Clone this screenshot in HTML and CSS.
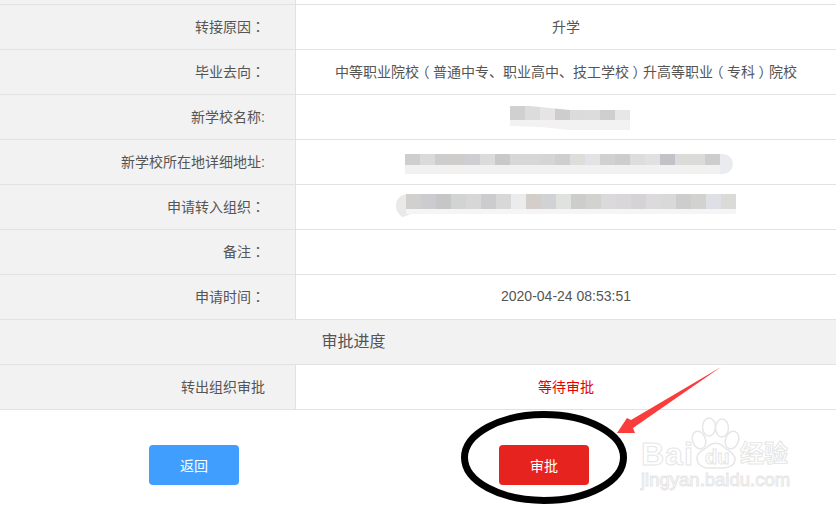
FILE: index.html
```html
<!DOCTYPE html>
<html lang="en">
<head>
  <meta charset="UTF-8" />
  <title>转接审批</title>
  <link rel="stylesheet" href="styles.css">
</head>
<body>
  <div class="page">
    <div class="rows">
      <div class="row row-stub"><div class="label"></div><div class="value"></div></div>
      <div class="row"><div class="label"><span>转接原因<span class="tc">：</span></span></div><div class="value">升学</div></div>
      <div class="row"><div class="label"><span>毕业去向<span class="tc">：</span></span></div><div class="value"><span>中等职业院校<span class="paren">（</span>普通中专、职业高中、技工学校<span class="paren">）</span>升高等职业<span class="paren">（</span>专科<span class="paren">）</span>院校</span></div></div>
      <div class="row"><div class="label">新学校名称:</div><div class="value">
        <svg class="blur blur-name" width="120" height="24" viewBox="0 0 120 24">
          <g>
            <rect x="0" width="15" height="14" fill="#d0d0d0"/><rect x="15" width="15" height="14" fill="#dcdcdc"/><rect x="30" width="15" height="14" fill="#e6e4e5"/><rect x="45" width="15" height="14" fill="#cdcdcd"/><rect x="60" width="15" height="14" fill="#dbdbdb"/><rect x="75" width="15" height="14" fill="#dcdcda"/><rect x="90" width="15" height="14" fill="#cfcfcf"/><rect x="105" width="15" height="14" fill="#e6e7e9"/>
            <rect x="0" y="14" width="120" height="10" fill="#f2f2f2"/>
          </g>
          <polygon points="20,0 120,0 120,4 60,4" fill="#fff"/>
          <polygon points="0,20 30,21 60,24 0,24" fill="#fff"/>
        </svg>
      </div></div>
      <div class="row"><div class="label">新学校所在地详细地址:</div><div class="value">
        <svg class="blur blur-addr" width="328" height="20" viewBox="0 0 328 20">
          <path d="M315 0h3a10 10 0 0 1 0 20h-3z" fill="#eaebee"/>
          <rect x="0" width="15" height="11" fill="#cecece"/><rect x="15" width="15" height="11" fill="#d9dbda"/><rect x="30" width="30" height="11" fill="#cecdcc"/><rect x="60" width="15" height="11" fill="#cfcfd3"/><rect x="75" width="15" height="11" fill="#dbdbdb"/><rect x="90" width="15" height="11" fill="#c7cac9"/><rect x="105" width="30" height="11" fill="#d7d7d7"/><rect x="135" width="15" height="11" fill="#d6d5d4"/><rect x="150" width="15" height="11" fill="#d0cfd0"/><rect x="165" width="15" height="11" fill="#dfddda"/><rect x="180" width="15" height="11" fill="#e2e3e5"/><rect x="195" width="15" height="11" fill="#d1d1d2"/><rect x="210" width="15" height="11" fill="#cdcdcb"/><rect x="225" width="15" height="11" fill="#dddddd"/><rect x="240" width="15" height="11" fill="#e1e1e1"/><rect x="255" width="15" height="11" fill="#c2c3c8"/><rect x="270" width="30" height="11" fill="#dbdbd9"/><rect x="300" width="15" height="11" fill="#cdcdcd"/>
          <rect x="0" y="11" width="315" height="9" fill="#f1f1f1"/>
        </svg>
      </div></div>
      <div class="row"><div class="label"><span>申请转入组织<span class="tc">：</span></span></div><div class="value">
        <svg class="blur" width="340" height="24" viewBox="0 0 340 24">
          <path d="M10 0C2 2 0 7 0 12s3 9 7 11l8-3h325v-5H10z" fill="#e9e9e7"/>
          <rect x="10" width="15" height="15" fill="#d1d0ce"/><rect x="25" width="15" height="15" fill="#cbcbd0"/><rect x="40" width="15" height="15" fill="#c6c6c6"/><rect x="55" width="15" height="15" fill="#d1d4d2"/><rect x="70" width="15" height="15" fill="#d7d7d7"/><rect x="85" width="15" height="15" fill="#cccccf"/><rect x="100" width="15" height="15" fill="#d8d8d8"/><rect x="115" width="15" height="15" fill="#ececec"/><rect x="130" width="15" height="15" fill="#d3ceca"/><rect x="145" width="15" height="15" fill="#d0d2d5"/><rect x="160" width="15" height="15" fill="#dfe2de"/><rect x="175" width="15" height="15" fill="#cdcdcb"/><rect x="190" width="15" height="15" fill="#d2d2cf"/><rect x="205" width="15" height="15" fill="#dadada"/><rect x="220" width="15" height="15" fill="#d9d7d9"/><rect x="235" width="15" height="15" fill="#d4d4d4"/><rect x="250" width="15" height="15" fill="#dcdadc"/><rect x="265" width="15" height="15" fill="#d9d9d9"/><rect x="280" width="15" height="15" fill="#cdcdcd"/><rect x="295" width="15" height="15" fill="#d2d2d0"/><rect x="310" width="15" height="15" fill="#dde0e4"/><rect x="325" width="15" height="15" fill="#dadad9"/>
          <rect x="10" y="15" width="330" height="5" fill="#f5f5f5"/>
        </svg>
      </div></div>
      <div class="row"><div class="label"><span>备注<span class="tc">：</span></span></div><div class="value"></div></div>
      <div class="row"><div class="label"><span>申请时间<span class="tc">：</span></span></div><div class="value">2020-04-24 08:53:51</div></div>
      <div class="row row-head">审批进度</div>
      <div class="row"><div class="label">转出组织审批</div><div class="value status-wait">等待审批</div></div>
    </div>

    <div class="actions">
      <button class="btn btn-back" type="button">返回</button>
      <button class="btn btn-approve" type="button">审批</button>
    </div>

    <!-- screenshot markup + watermark -->
    <svg class="markup" width="836" height="509" viewBox="0 0 836 509">
      <ellipse cx="544" cy="457.5" rx="79.5" ry="43" fill="none" stroke="#000" stroke-width="7"/>
      <polygon points="721,367 631,420 627,418 617,433 635,433 633,428" fill="#fb3c3c"/>
      <g class="paw">
        <ellipse cx="699" cy="440" rx="6.5" ry="9" transform="rotate(-20 699 440)"/>
        <ellipse cx="709" cy="427" rx="6.5" ry="9"/>
        <ellipse cx="722" cy="428" rx="6.5" ry="9"/>
        <ellipse cx="732" cy="440" rx="6.5" ry="9" transform="rotate(20 732 440)"/>
        <path d="M697 458c0-6 6-7 10-11 5-5 12-5 17 0 4 4 11 6 11 12 0 6-6 9-12 9h-15c-6 0-11-4-11-10z"/>
      </g>
      <text class="wm wm-baidu" x="641" y="465">Bai</text>
      <text class="wm wm-du" x="705" y="464">du</text>
      <text class="wm wm-cn" x="740" y="462">经验</text>
      <text class="wm wm-url" x="641" y="486">jingyan.baidu.com</text>
    </svg>
  </div>
</body>
</html>
```

FILE: styles.css
```css
* {
  box-sizing: border-box;
}

body {
  margin: 0;
  background: #fff;
  font-family: "Liberation Sans", "Noto Sans CJK SC", sans-serif;
  font-size: 14px;
  color: #555;
}

.page {
  position: relative;
  width: 836px;
  height: 509px;
  overflow: hidden;
}

.row {
  display: flex;
  height: 45px;
  border-bottom: 1px solid #e2e2e2;
}

.row-stub {
  height: 5px;
}

.label {
  width: 296px;
  padding-right: 30px;
  padding-bottom: 2px;
  background: #f2f2f2;
  border-right: 1px solid #e2e2e2;
  display: flex;
  align-items: center;
  justify-content: flex-end;
}

.value {
  flex: 1;
  padding-bottom: 2px;
  display: flex;
  align-items: center;
  justify-content: center;
}

/* centred colon like the source font */
.tc {
  font-family: "Noto Sans CJK TC", sans-serif;
}

/* half-width glyph centred in a full-width box */
.paren {
  display: inline-block;
  width: 14px;
  text-align: center;
  font-feature-settings: "halt";
}

.row-head {
  background: #f2f2f2;
  font-size: 16px;
  padding-right: 129px;
  padding-bottom: 5px;
  align-items: center;
  justify-content: center;
}

.status-wait {
  color: #e60000;
}

.blur {
  display: block;
}

.blur-name {
  margin: 4px 0 0 8px;
}

.blur-addr {
  margin: 6px 0 0 6px;
}

.actions {
  display: flex;
  gap: 260px;
  padding: 35px 0 0 149px;
}

.btn {
  width: 90px;
  height: 40px;
  border: none;
  border-radius: 4px;
  color: #fff;
  font-family: inherit;
  font-size: 14px;
}

.btn-back {
  background: #409eff;
}

.btn-approve {
  background: #e6231f;
}

.markup {
  position: absolute;
  left: 0;
  top: 0;
}

.paw ellipse,
.paw path {
  fill: #fff;
  stroke: #e6e6e6;
  stroke-width: 1.5;
}

.wm {
  fill: #fff;
  stroke: #e6e6e6;
  stroke-width: 1;
  font-family: "Liberation Sans", "Noto Sans CJK SC", sans-serif;
}

.wm-baidu {
  font-size: 32px;
  font-weight: bold;
  letter-spacing: 1px;
}

.wm-du {
  font-size: 20px;
  font-weight: bold;
}

.wm-cn {
  font-size: 24px;
  font-weight: bold;
}

.wm-url {
  font-size: 18.5px;
}
```
